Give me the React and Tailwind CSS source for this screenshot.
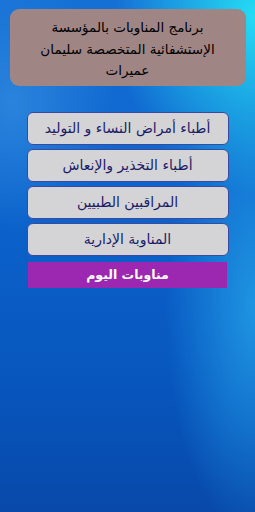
const items = [
	'أطباء أمراض النساء و التوليد',
	'أطباء التخذير والإنعاش',
	'المراقبين الطبيين',
	'المناوبة الإدارية',
];

export default function App() {
	return (
		<div
			dir="rtl"
			className="w-[255px] h-[512px] overflow-hidden flex flex-col items-center bg-[radial-gradient(ellipse_55%_35%_at_100%_3%,#25dcf4_0%,rgba(37,220,244,0)_100%),radial-gradient(ellipse_35%_45%_at_100%_60%,#1f95e2_0%,rgba(31,149,226,0)_100%),radial-gradient(ellipse_40%_25%_at_5%_20%,#2a84dc_0%,rgba(42,132,220,0)_100%),linear-gradient(180deg,#1570d6_0%,#0c63cc_40%,#0756bd_75%,#0849aa_100%)] font-['DejaVu_Sans',sans-serif]"
		>
			<div className="mt-[9px] w-[236px] h-[77px] rounded-[9px] bg-[#a08585] flex items-center justify-center px-2 pt-[4px] text-center text-[13.5px] leading-[21.5px] text-black">
				<p>
					برنامج المناوبات بالمؤسسة
					<br />
					الإستشفائية المتخصصة سليمان
					<br />
					عميرات
				</p>
			</div>

			<div className="mt-[26px] w-[202px] flex flex-col gap-[4px]">
				{items.map(label => (
					<button
						key={label}
						className="h-[33px] rounded-[6px] bg-[#d4d4d6] border border-[#3b4aa0] text-[#1c1c66] text-[14px] flex items-center justify-center"
					>
						{label}
					</button>
				))}
				<button className="mt-[2px] mx-auto w-[199px] h-[26px] bg-[#9c27b0] text-white font-bold text-[12.5px] flex items-center justify-center">
					مناوبات اليوم
				</button>
			</div>
		</div>
	);
}
